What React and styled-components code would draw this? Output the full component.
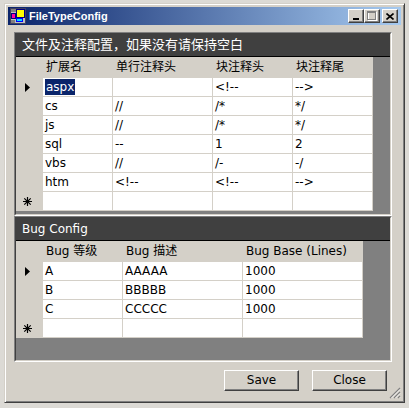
import React from "react";
import styled, { createGlobalStyle } from "styled-components";

const fileColumns = [
  { title: "扩展名", width: 70 },
  { title: "单行注释头", width: 100 },
  { title: "块注释头", width: 80 },
  { title: "块注释尾", width: 80 },
];

const fileRows = [
  ["aspx", "", "<!--", "-->"],
  ["cs", "//", "/*", "*/"],
  ["js", "//", "/*", "*/"],
  ["sql", "--", "1", "2"],
  ["vbs", "//", "/-", "-/"],
  ["htm", "<!--", "<!--", "-->"],
];

const bugColumns = [
  { title: "Bug 等级", width: 80 },
  { title: "Bug 描述", width: 120 },
  { title: "Bug Base (Lines)", width: 120 },
];

const bugRows = [
  ["A", "AAAAA", "1000"],
  ["B", "BBBBB", "1000"],
  ["C", "CCCCC", "1000"],
];

function AppIcon() {
  return (
    <svg width="16" height="16" viewBox="0 0 16 16">
      <rect x="0.5" y="0.5" width="15" height="15" fill="#c0c0c0" stroke="#404060" />
      <rect x="1" y="1" width="14" height="3" fill="#808080" />
      <rect x="1.5" y="5.5" width="4" height="5" fill="#ff00a0" stroke="#000080" />
      <rect x="6.5" y="1.5" width="8" height="8" fill="#ffff00" stroke="#000080" />
      <rect x="6.5" y="10.5" width="6" height="3" fill="#00e0ff" stroke="#0000ff" />
      <rect x="1" y="12" width="4" height="3" fill="#808080" />
    </svg>
  );
}

function Arrow() {
  return (
    <svg width="5" height="9" viewBox="0 0 5 9">
      <polygon points="0,0 5,4.5 0,9" fill="#000" />
    </svg>
  );
}

function Star() {
  return (
    <svg width="9" height="9" viewBox="0 0 9 9">
      <path
        d="M4.5 0v9M0 4.5h9M1.3 1.3l6.4 6.4M7.7 1.3l-6.4 6.4"
        stroke="#000"
        strokeWidth="1.2"
      />
    </svg>
  );
}

function DataGrid({ columns, rows, selectFirst }) {
  const template = "27px " + columns.map((c) => c.width + "px").join(" ");
  return (
    <GridArea>
      <Table $cols={template}>
        <HeadCell />
        {columns.map((c) => (
          <HeadCell key={c.title}>{c.title}</HeadCell>
        ))}
        {rows.map((row, i) => (
          <React.Fragment key={i}>
            <RowHead>{i === 0 && <Arrow />}</RowHead>
            {row.map((value, j) => (
              <Cell key={j}>
                {i === 0 && j === 0 && selectFirst ? (
                  <Highlight>{value}</Highlight>
                ) : (
                  value
                )}
              </Cell>
            ))}
          </React.Fragment>
        ))}
        <RowHead>
          <Star />
        </RowHead>
        {columns.map((c) => (
          <Cell key={c.title} />
        ))}
      </Table>
    </GridArea>
  );
}

function App() {
  return (
    <>
      <GlobalStyle />
      <Window>
        <TitleBar>
          <AppIcon />
          <Title>FileTypeConfig</Title>
          <CaptionButtons>
            <CaptionButton>
              <svg width="8" height="8" viewBox="0 0 8 8">
                <rect x="1" y="6" width="6" height="2" fill="#000" />
              </svg>
            </CaptionButton>
            <CaptionButton>
              <svg width="10" height="10" viewBox="0 0 10 10">
                <rect x="1.5" y="1.5" width="8" height="8" fill="none" stroke="#fff" />
                <rect x="0.5" y="0.5" width="8" height="8" fill="none" stroke="#808080" />
                <rect x="0" y="1" width="9" height="1" fill="#808080" />
              </svg>
            </CaptionButton>
            <CloseButton>
              <svg width="8" height="7" viewBox="0 0 8 7">
                <path d="M0.5 0.5l7 6M7.5 0.5l-7 6" stroke="#000" strokeWidth="1.6" />
              </svg>
            </CloseButton>
          </CaptionButtons>
        </TitleBar>
        <Client>
          <Panel $h={184}>
            <PanelInner>
              <HeaderBar $size={13}>文件及注释配置，如果没有请保持空白</HeaderBar>
              <DataGrid columns={fileColumns} rows={fileRows} selectFirst />
            </PanelInner>
          </Panel>
          <Panel $h={146}>
            <PanelInner>
              <HeaderBar $size={12}>Bug Config</HeaderBar>
              <DataGrid columns={bugColumns} rows={bugRows} />
            </PanelInner>
          </Panel>
          <ButtonRow>
            <Button>Save</Button>
            <Button>Close</Button>
            <Grip>
              <svg width="12" height="12" viewBox="0 0 12 12">
                <path d="M11 1L1 11M11 5L5 11M11 9L9 11" stroke="#808080" strokeWidth="1.2" />
                <path d="M11 2.5L2.5 11M11 6.5L6.5 11M11 10.5L10.5 11" stroke="#fff" strokeWidth="0.8" />
              </svg>
            </Grip>
          </ButtonRow>
        </Client>
      </Window>
    </>
  );
}

const GlobalStyle = createGlobalStyle`
  body {
    margin: 0;
    background: #dcdad5;
    font-family: "DejaVu Sans", "Noto Sans CJK SC", sans-serif;
  }
`;

const Window = styled.div`
  box-sizing: border-box;
  width: 401px;
  height: 400px;
  margin: 3px 0 0 4px;
  padding: 3px;
  background: #d4d0c8;
  border: 1px solid;
  border-color: #d4d0c8 #404040 #404040 #d4d0c8;
  box-shadow: inset 1px 1px #ffffff, inset -1px -1px #808080;
  display: flex;
  flex-direction: column;
`;

const TitleBar = styled.div`
  height: 18px;
  flex-shrink: 0;
  display: flex;
  align-items: center;
  padding: 0 3px 0 2px;
  background: linear-gradient(to right, #0a246a, #a6caf0);
`;

const Title = styled.div`
  margin-left: 3px;
  color: #ffffff;
  font-family: "Liberation Sans", Arial, sans-serif;
  font-weight: bold;
  font-size: 11px;
  flex: 1;
`;

const CaptionButtons = styled.div`
  display: flex;
  align-items: center;
`;

const CaptionButton = styled.div`
  box-sizing: border-box;
  width: 16px;
  height: 14px;
  background: #d4d0c8;
  border: 1px solid;
  border-color: #ffffff #404040 #404040 #ffffff;
  box-shadow: inset -1px -1px #808080;
  display: flex;
  align-items: center;
  justify-content: center;
`;

const CloseButton = styled(CaptionButton)`
  margin-left: 2px;
`;

const Client = styled.div`
  flex: 1;
  display: flex;
  flex-direction: column;
  padding: 7px 9px 8px 6px;
`;

const Panel = styled.div`
  box-sizing: border-box;
  height: ${(p) => p.$h}px;
  flex-shrink: 0;
  border: 1px solid;
  border-color: #808080 #ffffff #ffffff #808080;
`;

const PanelInner = styled.div`
  height: 100%;
  box-sizing: border-box;
  border: 1px solid;
  border-color: #404040 #d4d0c8 #d4d0c8 #404040;
  display: flex;
  flex-direction: column;
`;

const HeaderBar = styled.div`
  height: 22px;
  flex-shrink: 0;
  background: #404040;
  border-bottom: 1px solid #000000;
  color: #ffffff;
  font-size: ${(p) => p.$size}px;
  line-height: 22px;
  padding-left: 6px;
  white-space: nowrap;
`;

const GridArea = styled.div`
  flex: 1;
  background: #808080;
  overflow: hidden;
`;

const Table = styled.div`
  display: grid;
  width: max-content;
  grid-template-columns: ${(p) => p.$cols};
  grid-template-rows: 21px;
  grid-auto-rows: 19px;
  font-size: 12px;
  color: #000000;
`;

const HeadCell = styled.div`
  background: #d4d0c8;
  line-height: 21px;
  padding-left: 3px;
  white-space: nowrap;
`;

const RowHead = styled.div`
  background: #d4d0c8;
  display: flex;
  align-items: center;
  justify-content: center;
  padding-right: 4px;
`;

const Cell = styled.div`
  box-sizing: border-box;
  background: #ffffff;
  border-right: 1px solid #d4d0c8;
  border-bottom: 1px solid #d4d0c8;
  padding-left: 2px;
  line-height: 18px;
  white-space: nowrap;
  overflow: hidden;
`;

const Highlight = styled.span`
  display: inline-block;
  line-height: 16px;
  padding: 0 1px;
  background: #0a246a;
  color: #ffffff;
`;

const ButtonRow = styled.div`
  position: relative;
  display: flex;
  justify-content: flex-end;
  gap: 13px;
  margin-top: 8px;
  padding-right: 5px;
`;

const Button = styled.div`
  box-sizing: border-box;
  width: 75px;
  height: 21px;
  background: #d4d0c8;
  border: 1px solid;
  border-color: #ffffff #404040 #404040 #ffffff;
  box-shadow: inset -1px -1px #808080;
  font-size: 12px;
  line-height: 19px;
  text-align: center;
  color: #000000;
`;

const Grip = styled.div`
  position: absolute;
  right: -9px;
  bottom: -8px;
  width: 12px;
  height: 12px;
  display: flex;
`;

export default App;
